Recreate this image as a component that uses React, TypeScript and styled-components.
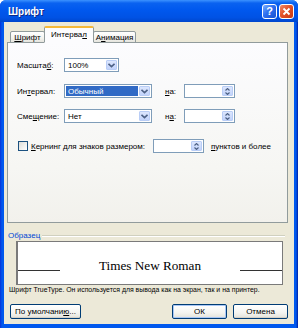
import styled, { createGlobalStyle } from 'styled-components';

const GlobalStyle = createGlobalStyle`
  html, body { margin: 0; padding: 0; background: #fff; }
  body { font-family: "Liberation Sans", Arial, sans-serif; }
`;

const Frame = styled.div`
  width: 298px;
  height: 328px;
  box-sizing: border-box;
  display: flex;
  flex-direction: column;
  padding: 0 4px 4px 4px;
  background: linear-gradient(90deg, #0831d9 0px, #0058ee 2px, #0058ee 296px, #001ea0 298px);
  border-radius: 6px 6px 0 0;
  overflow: hidden;
`;

const TitleBar = styled.div`
  height: 22px;
  margin: 0 -4px;
  padding: 0 4px 0 8px;
  display: flex;
  align-items: center;
  gap: 2px;
  background: linear-gradient(180deg, #3c92ff 0%, #0a62f0 14%, #0058ee 45%, #0052e4 80%, #0046cc 100%);
`;

const Title = styled.div`
  flex: 1;
  color: #fff;
  font-weight: bold;
  font-size: 10px;
  text-shadow: 1px 1px 0 #0a2a8a;
`;

const CapButton = styled.div<{ $close?: boolean }>`
  width: 15px;
  height: 15px;
  box-sizing: border-box;
  border: 1px solid #fff;
  border-radius: 3px;
  display: flex;
  align-items: center;
  justify-content: center;
  color: #fff;
  font-weight: bold;
  font-size: 11px;
  background: ${p => p.$close
    ? 'linear-gradient(135deg, #f08a6a 0%, #e2522a 45%, #c83a14 100%)'
    : 'linear-gradient(135deg, #7fb0ff 0%, #2c6ff0 45%, #1a52d0 100%)'};
`;

const Body = styled.div`
  flex: 1;
  background: #ece9d8;
  padding: 4px 6px 0 3px;
  display: flex;
  flex-direction: column;
  font-size: 8px;
  color: #000;
`;

const TabStrip = styled.div`
  height: 17px;
  display: flex;
  align-items: flex-end;
  padding-left: 3px;
  margin-bottom: -1px;
  position: relative;
  z-index: 1;
`;

const Tab = styled.div<{ $active?: boolean; $w: number }>`
  width: ${p => p.$w}px;
  height: ${p => (p.$active ? 17 : 12)}px;
  box-sizing: border-box;
  margin: 0 ${p => (p.$active ? -1 : 0)}px;
  display: flex;
  align-items: center;
  justify-content: center;
  border: 1px solid #919b9c;
  border-bottom: ${p => (p.$active ? '1px solid #fcfcfe' : '1px solid #919b9c')};
  border-top: ${p => (p.$active ? '2px solid #f5b93a' : '1px solid #919b9c')};
  border-radius: 2px 2px 0 0;
  background: ${p => (p.$active ? '#fcfcfe' : 'linear-gradient(180deg, #ffffff 0%, #f3f3ef 60%, #e6e5de 100%)')};
  padding-bottom: ${p => (p.$active ? 1 : 0)}px;
  z-index: ${p => (p.$active ? 2 : 0)};
`;

const Panel = styled.div`
  height: 181px;
  box-sizing: border-box;
  border: 1px solid #919b9c;
  background: linear-gradient(180deg, #fcfcfe 0%, #f6f6f3 70%, #f2f1ec 100%);
  padding: 15px 0 0 9px;
  display: flex;
  flex-direction: column;
`;

const Row = styled.div<{ $gap: number }>`
  display: flex;
  align-items: center;
  height: 14px;
  margin-bottom: ${p => p.$gap}px;
`;

const Label = styled.div<{ $w: number }>`
  width: ${p => p.$w}px;
  flex: none;
  white-space: nowrap;
`;

const Combo = styled.div<{ $w: number }>`
  width: ${p => p.$w}px;
  height: 14px;
  box-sizing: border-box;
  border: 1px solid #7f9db9;
  background: #fff;
  display: flex;
  align-items: stretch;
  padding: 1px;
`;

const ComboText = styled.div<{ $sel?: boolean }>`
  flex: 1;
  display: flex;
  align-items: center;
  padding-left: 2px;
  background: ${p => (p.$sel ? '#316ac5' : 'transparent')};
  color: ${p => (p.$sel ? '#fff' : '#000')};
  margin-right: 1px;
`;

const DropBtn = styled.div`
  width: 11px;
  box-sizing: border-box;
  border: 1px solid #b9cdf6;
  border-radius: 1px;
  background: linear-gradient(180deg, #dce6fd 0%, #c2d3fb 100%);
  display: flex;
  align-items: center;
  justify-content: center;
`;

const Spin = styled.div<{ $w: number }>`
  width: ${p => p.$w}px;
  height: 14px;
  box-sizing: border-box;
  border: 1px solid #7f9db9;
  background: #fff;
  display: flex;
  justify-content: flex-end;
  padding: 1px;
`;

const SpinBtn = styled.div`
  width: 11px;
  box-sizing: border-box;
  border: 1px solid #b9cdf6;
  border-radius: 1px;
  background: linear-gradient(180deg, #dce6fd 0%, #c2d3fb 100%);
  display: flex;
  flex-direction: column;
  align-items: center;
  justify-content: center;
  gap: 1px;
`;

const Check = styled.div`
  width: 10px;
  height: 10px;
  box-sizing: border-box;
  border: 1px solid #1c5180;
  background: linear-gradient(135deg, #dcdcd7 0%, #fff 100%);
  margin: 0 3px 0 1px;
  flex: none;
`;

const GroupHead = styled.div`
  display: flex;
  align-items: center;
  margin: 8px 0 0 1px;
  height: 9px;
  color: #0046d5;
  gap: 2px;
`;

const GroupLine = styled.div`
  flex: 1;
  height: 0;
  border-top: 1px solid #d0d0bf;
  border-bottom: 1px solid #fff;
  margin-right: 3px;
`;

const Preview = styled.div`
  height: 44px;
  margin: 1px 5px 0 9px;
  box-sizing: border-box;
  border: 1px solid #7a7a7a;
  border-left-width: 2px;
  background: #fff;
  display: flex;
  align-items: center;
  justify-content: space-between;
  padding-top: 6px;
`;

const Rule = styled.div`
  width: 42px;
  height: 1px;
  background: #333;
  margin-top: 8px;
`;

const Sample = styled.div`
  font-family: "Liberation Serif", "Times New Roman", serif;
  font-size: 13.2px;
  color: #000;
`;

const Note = styled.div`
  font-size: 6.9px;
  padding-left: 2px;
  height: 10px;
  line-height: 10px;
  white-space: nowrap;
`;

const Buttons = styled.div`
  display: flex;
  align-items: center;
  margin-top: 9px;
  padding-left: 3px;
  gap: 6px;
`;

const Button = styled.div<{ $w: number; $default?: boolean }>`
  width: ${p => p.$w}px;
  height: 15px;
  box-sizing: border-box;
  border: 1px solid #003c74;
  border-radius: 2px;
  background: linear-gradient(180deg, #ffffff 0%, #f4f4f0 60%, #e3e2da 100%);
  box-shadow: ${p => (p.$default ? 'inset 0 0 0 1px #a8c6f5' : 'inset 0 -1px 0 #d6d0c5')};
  display: flex;
  align-items: center;
  justify-content: center;
  font-size: 8px;
`;

const Spacer = styled.div`
  flex: 1;
`;

const Chevron = () => (
  <svg width="7" height="5" viewBox="0 0 7 5">
    <path d="M0.5 0.8 L3.5 3.6 L6.5 0.8" fill="none" stroke="#4d6185" strokeWidth="1.6" />
  </svg>
);

const Arrow = ({ up }: { up?: boolean }) => (
  <svg width="5" height="3" viewBox="0 0 5 3">
    <path d={up ? 'M0.5 2.5 L2.5 0.5 L4.5 2.5' : 'M0.5 0.5 L2.5 2.5 L4.5 0.5'} fill="none" stroke="#4d6185" strokeWidth="1.1" />
  </svg>
);

const SpinBox = ({ w }: { w: number }) => (
  <Spin $w={w}>
    <SpinBtn><Arrow up /><Arrow /></SpinBtn>
  </Spin>
);

export default function App() {
  return (
    <>
      <GlobalStyle />
      <Frame>
        <TitleBar>
          <Title>Шрифт</Title>
          <CapButton>?</CapButton>
          <CapButton $close>
            <svg width="9" height="9" viewBox="0 0 9 9">
              <path d="M1.5 1.5 L7.5 7.5 M7.5 1.5 L1.5 7.5" stroke="#fff" strokeWidth="1.8" />
            </svg>
          </CapButton>
        </TitleBar>
        <Body>
          <TabStrip>
            <Tab $w={35}><u>Ш</u>рифт</Tab>
            <Tab $w={50} $active>Интерва<u>л</u></Tab>
            <Tab $w={43}>А<u>н</u>имация</Tab>
          </TabStrip>
          <Panel>
            <Row $gap={12}>
              <Label $w={47}>Масшта<u>б</u>:</Label>
              <Combo $w={55}><ComboText>100%</ComboText><DropBtn><Chevron /></DropBtn></Combo>
            </Row>
            <Row $gap={11}>
              <Label $w={47}>Ин<u>т</u>ервал:</Label>
              <Combo $w={88}><ComboText $sel>Обычный</ComboText><DropBtn><Chevron /></DropBtn></Combo>
              <Label $w={19} style={{ marginLeft: 13 }}><u>н</u>а:</Label>
              <SpinBox w={51} />
            </Row>
            <Row $gap={16}>
              <Label $w={47}>Сме<u>щ</u>ение:</Label>
              <Combo $w={88}><ComboText>Нет</ComboText><DropBtn><Chevron /></DropBtn></Combo>
              <Label $w={19} style={{ marginLeft: 13 }}>н<u>а</u>:</Label>
              <SpinBox w={51} />
            </Row>
            <Row $gap={0}>
              <Check />
              <Label $w={122}><u>К</u>ернинг для знаков размером:</Label>
              <SpinBox w={51} />
              <Label $w={70} style={{ marginLeft: 7 }}><u>п</u>унктов и более</Label>
            </Row>
          </Panel>
          <GroupHead>Образец<GroupLine /></GroupHead>
          <Preview>
            <Rule />
            <Sample>Times New Roman</Sample>
            <Rule />
          </Preview>
          <Note>Шрифт TrueType. Он используется для вывода как на экран, так и на принтер.</Note>
          <Buttons>
            <Button $w={71}>По умолчани<u>ю</u>...</Button>
            <Spacer />
            <Button $w={55} $default>ОК</Button>
            <Button $w={55}>Отмена</Button>
          </Buttons>
        </Body>
      </Frame>
    </>
  );
}
